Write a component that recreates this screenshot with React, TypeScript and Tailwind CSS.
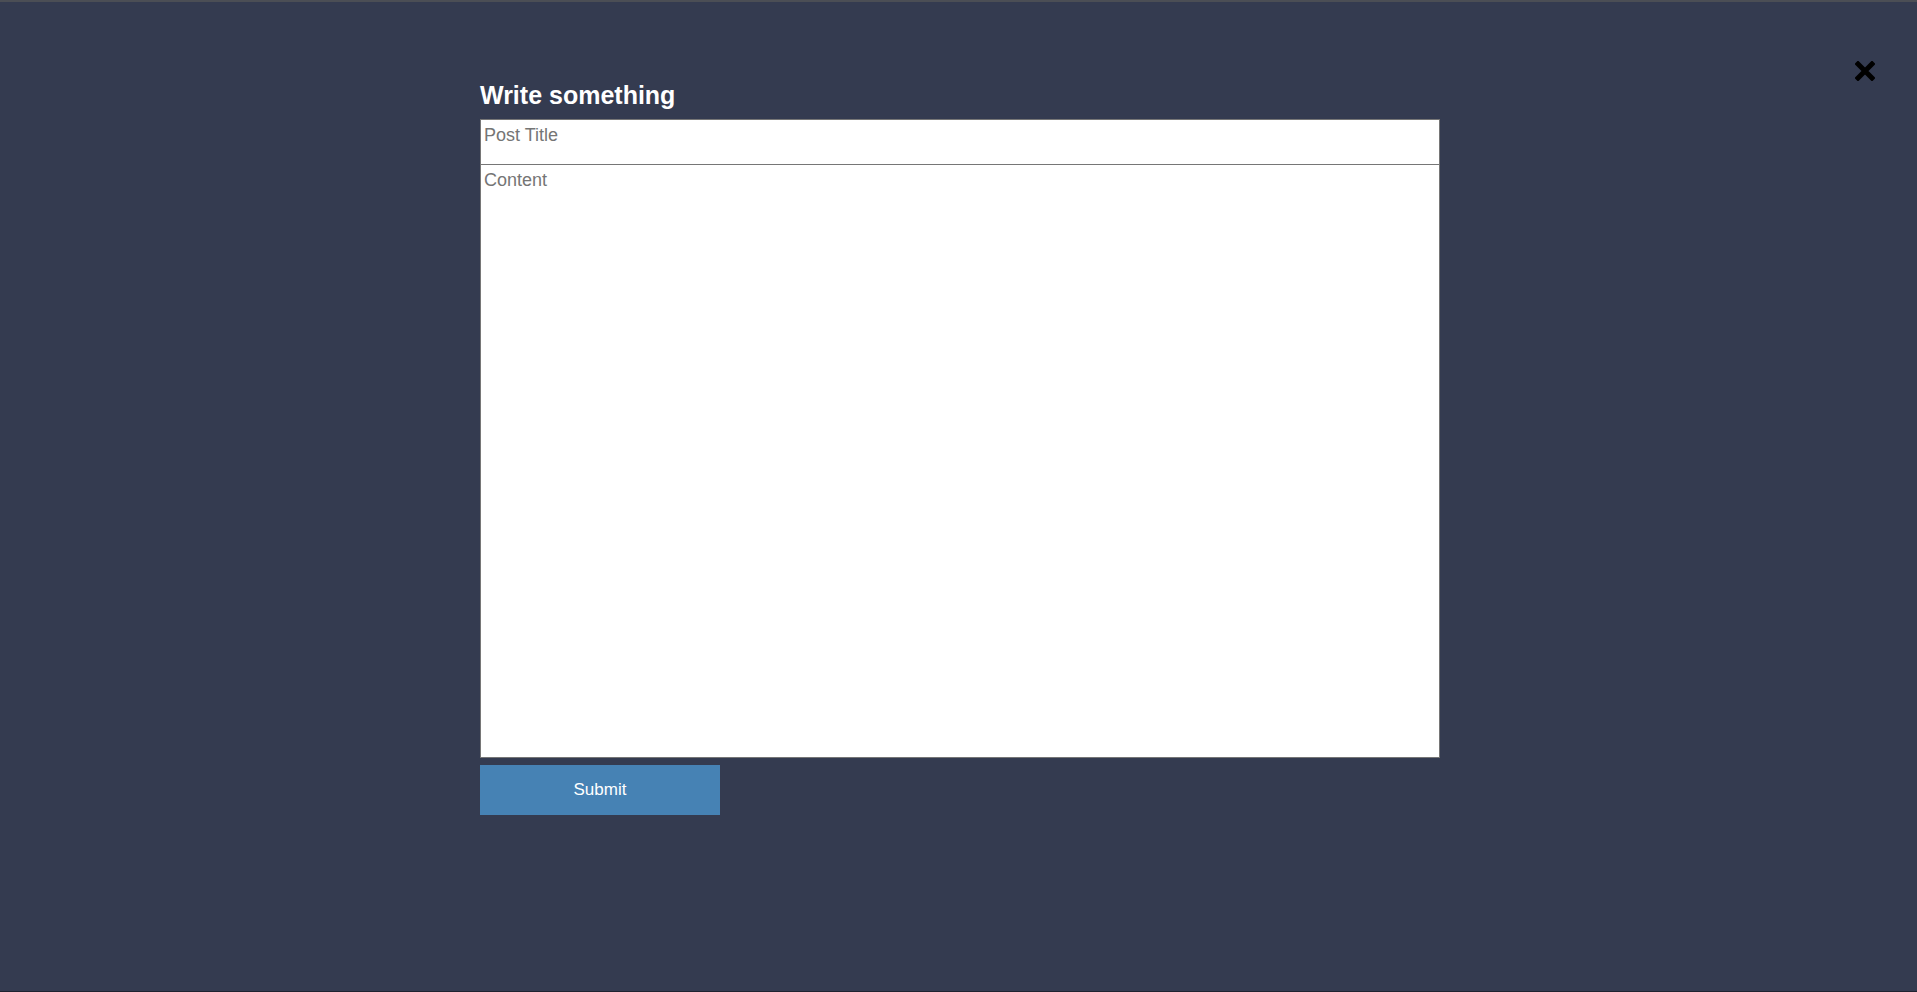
import React from "react";

const CloseIcon = () => (
  <svg width="20" height="20" viewBox="0 0 20 20" xmlns="http://www.w3.org/2000/svg">
    <path d="M3 3L17 17M17 3L3 17" stroke="#000" strokeWidth="5" strokeLinecap="square" />
  </svg>
);

export default function App() {
  return (
    <div className="relative h-[992px] w-full overflow-hidden border-t-2 border-b border-t-[#4b4e55] border-b-[#1f2331] bg-[#343b50] font-['Liberation_Sans',Arial,sans-serif]">
      <button className="absolute right-[42px] top-[59px] p-0">
        <CloseIcon />
      </button>

      <div className="ml-[480px] w-[960px] pt-[79px]">
        <h2 className="text-[25px] font-bold leading-[28px] text-white">Write something</h2>
        <form className="mt-[10px] flex flex-col" onSubmit={(e) => e.preventDefault()}>
          <textarea
            placeholder="Post Title"
            className="h-[45px] w-full resize-none border border-b-0 border-[#767676] bg-white px-[3px] pt-[2px] text-[18px] text-black outline-none placeholder:text-[#757575]"
          />
          <textarea
            placeholder="Content"
            className="h-[594px] w-full resize-none border border-[#767676] bg-white px-[3px] pt-[2px] text-[18px] text-black outline-none placeholder:text-[#757575]"
          />
          <button
            type="submit"
            className="mt-[7px] h-[50px] w-[240px] bg-[#4682b4] text-[17px] text-white"
          >
            Submit
          </button>
        </form>
      </div>
    </div>
  );
}
